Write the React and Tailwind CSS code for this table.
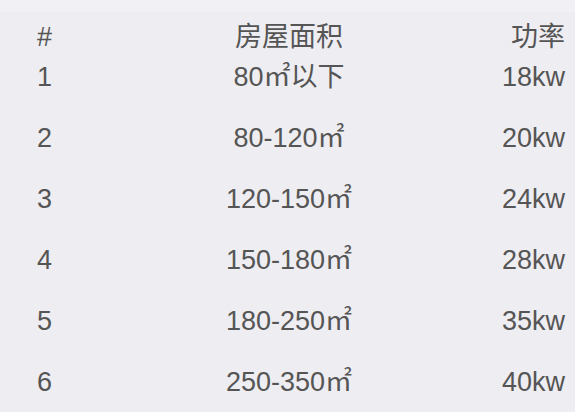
const rows = [
  { id: '1', area: '80㎡以下', power: '18kw' },
  { id: '2', area: '80-120㎡', power: '20kw' },
  { id: '3', area: '120-150㎡', power: '24kw' },
  { id: '4', area: '150-180㎡', power: '28kw' },
  { id: '5', area: '180-250㎡', power: '35kw' },
  { id: '6', area: '250-350㎡', power: '40kw' },
];

function App() {
  return (
    <div
      className="flex w-[580px] h-[412px] overflow-hidden bg-white"
      style={{ fontFamily: '"Liberation Sans", "Noto Sans CJK SC", sans-serif' }}
    >
      <div className="w-[575px] h-full bg-[#eeedf2] flex flex-col">
        <div className="h-[12px] shrink-0 bg-[#f1f0f4]" />
        <div className="pt-[5px] text-[27px] text-[#555]">
          <div className="grid grid-cols-[152px_200px_176px] pl-[37px] h-[40px] leading-[40px]">
            <div>#</div>
            <div className="text-center">房屋面积</div>
            <div className="text-right">功率</div>
          </div>
          {rows.map((r) => (
            <div
              key={r.id}
              className="grid grid-cols-[152px_200px_176px] pl-[37px] h-[61px] leading-[40px]"
            >
              <div>{r.id}</div>
              <div className="text-center">{r.area}</div>
              <div className="text-right">{r.power}</div>
            </div>
          ))}
        </div>
      </div>
    </div>
  );
}

export default App;
